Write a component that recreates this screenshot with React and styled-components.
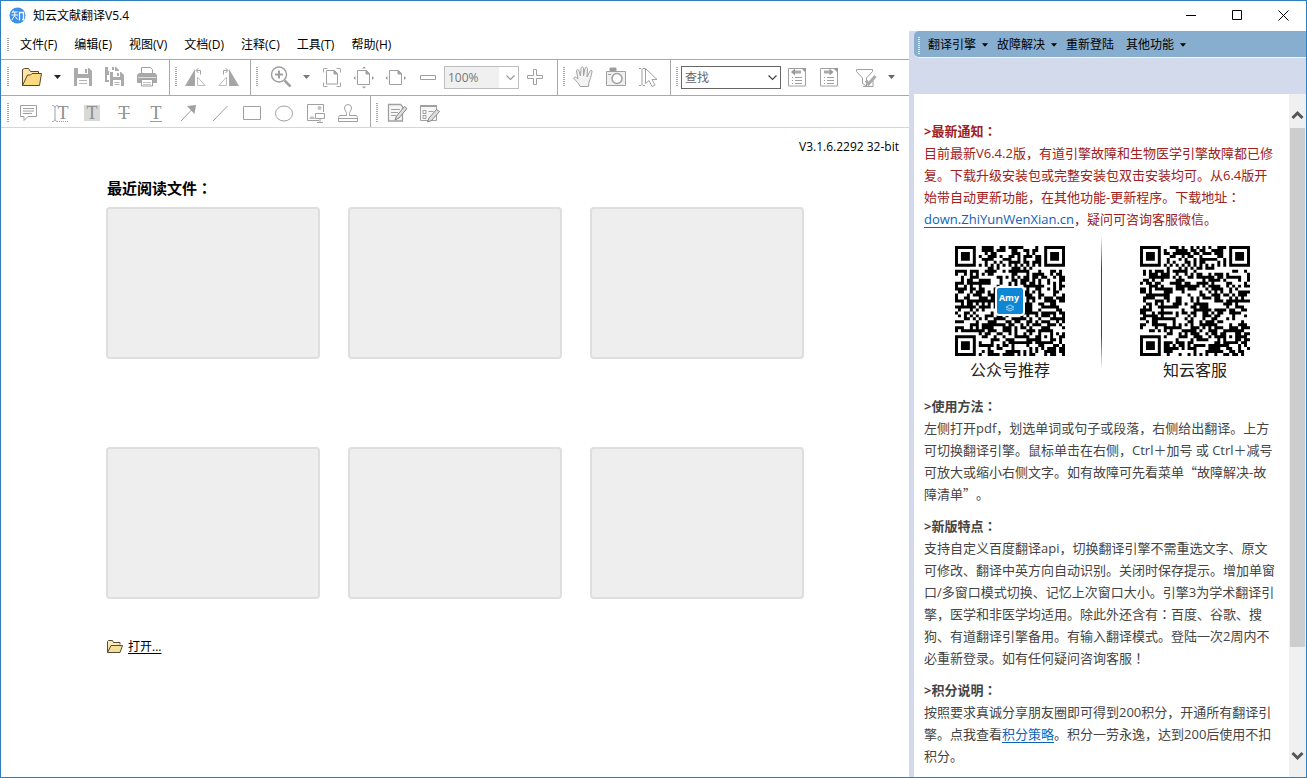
import React from 'react';
import styled, { createGlobalStyle } from 'styled-components';

const GlobalStyle = createGlobalStyle`
  * {
    box-sizing: border-box;
  }

  body {
    margin: 0;
    font-family: "Open Sans", "Noto Sans CJK SC", sans-serif;
    font-size: 12px;
    color: #000;
    text-spacing-trim: space-all;
  }

  button, select {
    font: inherit;
    color: inherit;
  }
`;

// Window frame
const Window = styled.div`
  display: flex;
  flex-direction: column;
  height: 100vh;
  background: #fff;
  border: 1px solid #2f7fbe;
  overflow: hidden;
`;

const TitleBar = styled.header`
  display: flex;
  align-items: center;
  flex: none;
  height: 30px;
  padding: 0 0 2px 8px;
`;

const Title = styled.h1`
  flex: 1;
  margin: 0 0 0 7px;
  font-size: 12px;
  font-weight: 400;
`;

const WindowButton = styled.button`
  display: flex;
  align-items: center;
  justify-content: center;
  width: 46px;
  height: 28px;
  padding: 0;
  border: 0;
  background: none;
`;

const Body = styled.div`
  display: flex;
  flex: 1;
  min-height: 0;
`;

const Reader = styled.main`
  display: flex;
  flex-direction: column;
  flex: 1;
  min-width: 0;
`;

// Menus
const MenuBar = styled.nav`
  display: flex;
  align-items: center;
  height: 28px;
  padding-left: 6px;
`;

const MenuItem = styled.button`
  padding: 0 9px 0 8px;
  border: 0;
  background: none;
  line-height: 20px;
  white-space: nowrap;
`;

const Grip = styled.span`
  flex: none;
  width: 2px;
  height: ${(p) => p.$height || 20}px;
  margin-right: ${(p) => p.$gap || 3}px;
  background: repeating-linear-gradient(${(p) => p.$color || '#a3a8b0'} 0 1px, transparent 1px 2px);
`;

// Toolbars
const ToolbarRow = styled.div`
  display: flex;
  height: 36px;
  border-top: 1px solid #a9a9a9;
`;

const AnnotationRow = styled.div`
  display: flex;
  height: 33px;
  border-top: 1px solid #a9a9a9;
  border-bottom: 1px solid #d4d6da;
`;

const ToolGroup = styled.div`
  display: flex;
  align-items: center;
  flex: none;
  padding: ${(p) => (p.$low ? '3px 6px 0' : '0 6px 1px')};
  padding-left: ${(p) => (p.$first ? 6 : 5)}px;
  border-right: ${(p) => (p.$open ? 0 : 1)}px solid #a9a9a9;
`;

const ToolButton = styled.button`
  display: flex;
  align-items: center;
  justify-content: center;
  flex: none;
  width: ${(p) => (p.$narrow ? 19 : 32)}px;
  height: 28px;
  margin-left: ${(p) => (p.$spaced ? 5 : 0)}px;
  padding: 0;
  border: 0;
  background: none;
`;

const Combo = styled.span`
  position: relative;
  flex: none;
  width: ${(p) => p.$width}px;
  height: 23px;

  svg {
    position: absolute;
    top: 8px;
    right: 4px;
    pointer-events: none;
  }
`;

const ComboSelect = styled.select`
  appearance: none;
  display: block;
  width: 100%;
  height: 100%;
  padding: 0 20px 0 3px;
  border: 1px solid ${(p) => (p.$muted ? '#bdbdbd' : '#666')};
  border-radius: 0;
  background: ${(p) => (p.$muted ? 'linear-gradient(to right, #f0f0f0 54px, #fff 54px)' : '#fff')};
  color: ${(p) => (p.$muted ? '#777' : '#666')};
  outline: 0;
`;

// Start page
const StartPage = styled.section`
  flex: 1;
  padding: 8px 10px 0 105px;
`;

const Version = styled.p`
  margin: 0;
  line-height: 22px;
  text-align: right;
`;

const RecentTitle = styled.h2`
  margin: 19px 0 8px 1px;
  font-size: 15px;
  font-weight: 700;
  line-height: 22px;
`;

const RecentGrid = styled.div`
  display: grid;
  grid-template-columns: repeat(3, 214px);
  gap: 88px 28px;
`;

const RecentCard = styled.div`
  height: 152px;
  background: #eee;
  border: 2px solid #dedede;
  border-radius: 4px;
`;

const OpenLink = styled.a`
  display: inline-flex;
  align-items: center;
  gap: 5px;
  margin: 38px 0 0 1px;
  line-height: 20px;
  color: #000;
  text-underline-offset: 2px;
`;

// Translation panel
const Panel = styled.aside`
  display: flex;
  flex-direction: column;
  flex: none;
  width: 397px;
  padding-left: 5px;
  background: #d3daec;
`;

const PanelMenu = styled.nav`
  display: flex;
  align-items: center;
  gap: 9px;
  flex: none;
  height: 27px;
  padding: 2px 0 0 4px;
  background: #87adcf;
  border-bottom: 1px solid #f2f5fa;
  border-radius: 5px 0 0 5px;
`;

const PanelMenuItem = styled.button`
  display: flex;
  align-items: center;
  gap: 6px;
  padding: 0 ${(p) => (p.$plain ? 3 : 0)}px 0 0;
  border: 0;
  background: none;
  line-height: 20px;
`;

const PanelBody = styled.div`
  display: flex;
  flex: 1;
  min-height: 0;
  margin-top: 36px;
  background: #fff;
`;

const Article = styled.div`
  flex: 1;
  padding: 26px 0 0 10px;
  overflow: hidden;
  font-size: 13px;
  line-height: 22px;
  color: #444;
  white-space: nowrap;
`;

const Note = styled.section`
  margin-bottom: 10px;
  color: ${(p) => (p.$alert ? '#a02020' : 'inherit')};

  h3 {
    margin: 0;
    font-size: 13px;
    font-weight: 700;
  }

  p {
    margin: 0;
  }

  a {
    color: #0f62b8;
    text-underline-offset: 3px;
  }
`;

const Quote = styled.span`
  font-family: "Noto Sans CJK SC", sans-serif;
`;

// Colons and exclamation marks sit in the middle of their cell
const Centered = styled.span.attrs({ lang: 'zh-TW' })`
  font-family: "Noto Sans CJK TC", sans-serif;
  line-height: 1;
`;

const CodeRow = styled.div`
  display: flex;
  gap: 36px;
  margin: -5px 0 14px;
  padding-left: 31px;
`;

const CodeFigure = styled.figure`
  display: flex;
  flex-direction: column;
  align-items: center;
  width: 110px;
  margin: 11px 0 0;

  figcaption {
    margin-top: 3px;
    font-size: 16px;
    color: #222;
  }
`;

const CodeDivider = styled.span`
  width: 1px;
  height: 134px;
  margin-right: 2px;
  background: linear-gradient(#fff, #444 25%, #444 75%, #fff);
`;

const ScrollBar = styled.div`
  display: flex;
  flex-direction: column;
  flex: none;
  width: 17px;
  background: #f0f0f0;
`;

const ScrollButton = styled.button`
  display: flex;
  justify-content: center;
  align-items: center;
  width: 17px;
  height: ${(p) => (p.$up ? 34 : 38)}px;
  padding: ${(p) => (p.$up ? '8px 0 0' : '0 0 4px')};
  border: 0;
  background: none;
`;

const ScrollTrack = styled.div`
  flex: 1;
  padding: 0 1px;
`;

const ScrollThumb = styled.div`
  height: 85%;
  background: #cdcdcd;
`;

// Icons
const Icon = ({ children, size = 24 }) => (
  <svg
    width={size}
    height={size}
    viewBox="0 0 24 24"
    fill="none"
    stroke="#a0a0a0"
    aria-hidden="true"
  >
    {children}
  </svg>
);

const Caret = ({ color = '#000', width = 7 }) => (
  <svg width={width} height="4" viewBox="0 0 7 4" aria-hidden="true">
    <path d="M0 0h7L3.500 4z" fill={color} />
  </svg>
);

const Chevron = ({ color }) => (
  <svg width="9" height="7" viewBox="0 0 9 7" fill="none" stroke={color} aria-hidden="true">
    <path d="M.5 1.500l4 4 4-4" strokeWidth="1.200" />
  </svg>
);

const ScrollArrow = ({ d }) => (
  <svg width="13" height="10" viewBox="0 0 13 10" fill="none" stroke="#555" strokeWidth="3" aria-hidden="true">
    <path d={d} />
  </svg>
);

const Logo = () => (
  <svg width="17" height="17" viewBox="0 0 17 17" fill="none" stroke="#fff" aria-hidden="true">
    <circle cx="8.500" cy="8.500" r="8" fill="#3b8fe8" stroke="none" />
    <path d="M4.500 3.500L3 6M4 5H8.500M2.500 8H9M5.800 5V8.500L2.800 13M6.300 9.500L8.500 12.500" />
    <path d="M10.500 13.500V5.500H14.500V12.500H13" strokeWidth="1.300" />
  </svg>
);

const icons = {
  open: (
    <>
      <path d="M2.500 20.500V4.500l2-1h4l2 3h8v3" fill="#fbe6a8" stroke="#5a4630" />
      <path d="M2.500 20.500l5-10.500 3 0 1.500-1.500H21.500L19.500 20.500z" fill="#fbd980" stroke="#5a4630" />
    </>
  ),
  save: (
    <>
      <path d="M3 3h15l3 3v15H3z" fill="#ababab" stroke="none" />
      <path d="M7 3h10v6H7zM6 13h12v8H6z" fill="#fff" stroke="none" />
      <path d="M14 4h2v4h-2z" fill="#ababab" stroke="none" />
      <path d="M8 15.500h8M8 18.500h8" stroke="#b5b5b5" />
    </>
  ),
  saveAll: (
    <>
      <path d="M2 2h11l3 3v12H2z" fill="#ababab" stroke="none" />
      <path d="M5 2h7v4H5zM4 10h3v5H4z" fill="#fff" stroke="none" />
      <path d="M9 2h2v3H9z" fill="#ababab" stroke="none" />
      <path d="M6.500 6.500H18l3.500 3.500V21.500H6.500z" fill="#ababab" stroke="#fff" />
      <path d="M10 7h7v5h-7zM10 15h8v6h-8z" fill="#fff" stroke="none" />
      <path d="M14 8h2v3h-2z" fill="#ababab" stroke="none" />
      <path d="M11.500 17.500h5M11.500 19.500h5" stroke="#b5b5b5" />
    </>
  ),
  print: (
    <>
      <path d="M6.500 9V2.500h9l2 2V9" fill="#fff" />
      <path d="M2 10l2-2h16l2 2v8H2z" fill="#a8a8a8" stroke="none" />
      <path d="M6.500 14.500h11v6.500h-11z" fill="#fff" />
      <path d="M3 12.500h18" stroke="#ddd" />
      <path d="M8 17.500h8M8 19.500h8" stroke="#c4c4c4" />
    </>
  ),
  rotateLeft: (
    <>
      <path d="M1 21H11V4z" fill="#a6a6a6" stroke="none" />
      <path d="M13.500 20.500H21L13.500 12z" stroke="#c0c0c0" />
      <path d="M12.500 5.500h4v4M14.500 3l-2.500 2.500 2.500 2.500" />
    </>
  ),
  rotateRight: (
    <>
      <path d="M23 21H13V4z" fill="#a6a6a6" stroke="none" />
      <path d="M10.500 20.500H3L10.500 12z" stroke="#c0c0c0" />
      <path d="M11.500 5.500h-4v4M9.500 3l2.500 2.500-2.500 2.500" />
    </>
  ),
  zoomIn: (
    <>
      <circle cx="10" cy="9.500" r="7.500" strokeWidth="1.500" />
      <path d="M10 5.500v8M6 9.500h8" strokeWidth="2" />
      <path d="M15.500 15.500l6 6" strokeWidth="2.500" />
    </>
  ),
  fitPage: (
    <>
      <path d="M3.500 7.500V3.500h4M16.500 3.500h4v4M20.500 17.500v4h-4M7.500 21.500h-4v-4" stroke="#aaa" />
      <path d="M6.500 5.500h8l3 3v10.500h-11z" />
      <path d="M14 5.500v3.500h3.500z" fill="#a0a0a0" />
    </>
  ),
  fitVisible: (
    <>
      <path d="M5.500 5.500h9l3 3v11h-12z" />
      <path d="M14 5.500v3.500h3.500z" fill="#a0a0a0" />
      <path d="M10 3.500l2-2 2 2zM10 21.500l2 2 2-2zM3.500 11l-2 2 2 2zM20 11l2 2-2 2z" fill="#999" stroke="none" />
    </>
  ),
  fitWidth: (
    <>
      <path d="M5.500 5.500h9l3 3v11h-12z" />
      <path d="M14 5.500v3.500h3.500z" fill="#a0a0a0" />
      <path d="M3.500 11l-2 2 2 2zM20 11l2 2-2 2z" fill="#999" stroke="none" />
    </>
  ),
  minus: <path d="M4.500 10.500h15v4h-15z" />,
  plus: <path d="M10.500 4.500h3v6h6v3h-6v6h-3v-6h-6v-3h6z" />,
  hand: (
    <path
      d="M8 21.500c-1-3-4-5.500-6.500-8.500 1-1.500 2.500-1 4.500 1L4.500 6c0-2 2-2 2.500 0l1.500 5L9 3.500c0-2 2.500-2 2.500 0V11l1.500-7.500c.5-2 2.500-1.500 2.500.5L15 12l3-6c1-1.500 2.500-.5 2 1-1 4-1.500 7-3 10l-.5 4.500z"
      fill="#f3f3f3"
    />
  ),
  camera: (
    <>
      <path d="M6 3h6v3H6z" fill="#999" />
      <path d="M2.500 6.500h19v14h-19z" fill="#f0f0f0" />
      <circle cx="13" cy="13.500" r="5" fill="#fff" strokeWidth="1.500" />
      <path d="M4 9.500h3" />
    </>
  ),
  selectText: (
    <>
      <path d="M3 3.500h2l1 1 1-1h2M6 4.500v15M3 20.500h2l1-1 1 1h2" />
      <path d="M9.500 3.500v15l3.500-3 3 6 3-1.500-3-5.500h5z" fill="#fff" />
    </>
  ),
  findPrev: (
    <>
      <path d="M3.500 3.500h14l3 3v14.500h-17z" fill="#fff" />
      <path d="M16 3h5v5z" fill="#999" stroke="none" />
      <path d="M10 7h6" strokeWidth="3" stroke="#aaa" />
      <path d="M6 7l4-3.500v7z" fill="#999" stroke="none" />
      <path d="M7 12.500h1M10 12.500h7M7 15.500h1M10 15.500h7M7 18.500h1M10 18.500h7" />
    </>
  ),
  findNext: (
    <>
      <path d="M3.500 3.500h14l3 3v14.500h-17z" fill="#fff" />
      <path d="M16 3h5v5z" fill="#999" stroke="none" />
      <path d="M7 7h6" strokeWidth="3" stroke="#aaa" />
      <path d="M16.500 7l-4-3.500v7z" fill="#999" stroke="none" />
      <path d="M7 12.500h1M10 12.500h7M7 15.500h1M10 15.500h7M7 18.500h1M10 18.500h7" />
    </>
  ),
  filter: (
    <>
      <path d="M2.500 4.500h16v2l-6 6.500v8l-4-2.500V13l-6-6.500z" />
      <path d="M9 21.500h10v-6" />
      <path d="M12 15.500l2.500 3.500 7-8" strokeWidth="3" stroke="#ababab" />
    </>
  ),
  comment: (
    <>
      <path d="M4.500 4.500h16v11h-8.500l-4 4v-4H4.500z" />
      <path d="M7 7.500h11M7 10h11M7 12.500h9" />
    </>
  ),
  textInsert: (
    <>
      <path d="M4 4.500c2 0 3 1 3 2v12c0 1-1 2-3 2M10 4.500c-2 0-3 1-3 2M10 20.500c-2 0-3-1-3-2" />
      <Letter x="15" />
      <path d="M11 20.500h9" strokeDasharray="1 1" />
    </>
  ),
  highlight: (
    <>
      <path d="M4 4h16v16H4z" fill="#d8d8d8" stroke="none" />
      <Letter x="12" />
    </>
  ),
  strike: (
    <>
      <Letter x="12" />
      <path d="M6 12.500h12" />
    </>
  ),
  underline: (
    <>
      <Letter x="12" />
      <path d="M6 20.500h12" />
    </>
  ),
  arrow: (
    <>
      <path d="M5 20L16 8.500" />
      <path d="M11 5L20 4l-1.500 9z" fill="#a0a0a0" stroke="none" />
    </>
  ),
  line: <path d="M5 20L19.500 5" />,
  rect: <path d="M3.500 5.500h17v13h-17z" />,
  ellipse: <ellipse cx="12" cy="12.500" rx="8.500" ry="7.500" />,
  imageNote: (
    <>
      <path d="M15 19.500H3.500v-16h16V11" />
      <circle cx="15.500" cy="7" r="2" fill="#c0c0c0" stroke="none" />
      <path d="M5 18c2-4 5-3 6 0z" fill="#c0c0c0" stroke="none" />
      <path d="M11.500 12.500h9v5h-9zM13 21.500h6M16 17.500v4" />
    </>
  ),
  stamp: (
    <path
      d="M10.500 12.500c0-2-2-3-2-5.500a3.500 3.500 0 0 1 7 0c0 2.500-2 3.500-2 5.500v2h7l1 2v4H2.500v-4l1-2h7zM2.500 17.500h19"
    />
  ),
  editPage: (
    <>
      <path d="M3.500 3.500h12l2 2v14.500h-14z" fill="#f7f7f7" strokeWidth="1.300" />
      <path d="M6 8.500h9M6 11.500h7M6 14.500h5" />
      <path d="M10 19l1.500-4 8-9.500 2.500 2-8 9.500z" fill="#ddd" stroke="#888" />
    </>
  ),
  editForm: (
    <>
      <path d="M3.500 4.500h16v15h-16z" fill="#f7f7f7" />
      <path d="M3.500 5h16" strokeWidth="2" />
      <path d="M6 9.500h3v3H6zM6 14.500h3v3H6zM11.500 10.500h5" />
      <path d="M10.500 21l1.500-4 7.500-8.500 3 2-8 9z" fill="#ddd" stroke="#888" />
    </>
  ),
};

function Letter({ x }) {
  return (
    <text
      x={x}
      y="18"
      textAnchor="middle"
      fontFamily="Liberation Serif, serif"
      fontSize="18"
      fill="#8c8c8c"
      stroke="none"
    >
      T
    </text>
  );
}

// Version 5 code: 37 modules a side, with three finders and one alignment mark
const SIZE = 37;

const ring = (x, y, r) => Math.max(Math.abs(x), Math.abs(y)) <= r && Math.max(Math.abs(x), Math.abs(y)) !== r - 1;

function codePath(seed) {
  let state = seed;
  let d = '';
  const finders = [[3, 3], [SIZE - 4, 3], [3, SIZE - 4]];
  for (let y = 0; y < SIZE; y += 1) {
    for (let x = 0; x < SIZE; x += 1) {
      state = (state * 1103515245 + 12345) % 2147483648;
      let dark = state / 2147483648 > 0.48;
      if (x === 6 || y === 6) dark = (x + y) % 2 === 0;
      if (Math.abs(x - 30) < 3 && Math.abs(y - 30) < 3) dark = ring(x - 30, y - 30, 2);
      finders.forEach(([fx, fy]) => {
        if (Math.abs(x - fx) < 5 && Math.abs(y - fy) < 5) {
          const far = Math.max(Math.abs(x - fx), Math.abs(y - fy));
          dark = far !== 4 && ring(x - fx, y - fy, 3);
        }
      });
      if (dark) d += `M${x} ${y}h1v1h-1z`;
    }
  }
  return d;
}

const Code = ({ seed, label, badge }) => (
  <svg width="110" height="110" viewBox="0 0 110 110" role="img" aria-label={label}>
    <path d={codePath(seed)} fill="#000" transform={`scale(${110 / SIZE})`} />
    {badge && (
      <>
        <rect x="40" y="40" width="30" height="30" rx="4" fill="#fff" />
        <rect x="42" y="42" width="26" height="26" rx="2" fill="#0f86d3" />
        <text x="54" y="55" textAnchor="middle" fontFamily="Open Sans, sans-serif" fontWeight="700" fontSize="9" fill="#fff">
          Amy
        </text>
        <path d="M51 61l4-2 4 2-4 2zM51 63l4 2 4-2" fill="none" stroke="#9fd4f5" />
      </>
    )}
  </svg>
);

const menus = ['文件(F)', '编辑(E)', '视图(V)', '文档(D)', '注释(C)', '工具(T)', '帮助(H)'];

const panelMenus = [
  { label: '翻译引擎', drop: true },
  { label: '故障解决', drop: true },
  { label: '重新登陆', drop: false },
  { label: '其他功能', drop: true },
];

const annotationTools = [
  ['comment', '附注'],
  ['textInsert', '插入文本'],
  ['highlight', '高亮'],
  ['strike', '删除线'],
  ['underline', '下划线'],
  ['arrow', '箭头'],
  ['line', '直线'],
  ['rect', '矩形'],
  ['ellipse', '椭圆'],
  ['imageNote', '图像'],
  ['stamp', '图章'],
];

const Tool = ({ name, label, spaced }) => (
  <ToolButton aria-label={label} $spaced={spaced}>
    <Icon>{icons[name]}</Icon>
  </ToolButton>
);

const DropTool = ({ label, color }) => (
  <ToolButton aria-label={label} $narrow>
    <Caret color={color} />
  </ToolButton>
);

const MainToolbar = () => (
  <ToolbarRow>
    <ToolGroup $first>
      <Grip $gap={7} />
      <Tool name="open" label="打开" />
      <DropTool label="打开选项" color="#222" />
      <Tool name="save" label="保存" />
      <Tool name="saveAll" label="全部保存" />
      <Tool name="print" label="打印" />
    </ToolGroup>
    <ToolGroup>
      <Grip />
      <Tool name="rotateLeft" label="向左旋转" />
      <Tool name="rotateRight" label="向右旋转" />
    </ToolGroup>
    <ToolGroup>
      <Grip $gap={7} />
      <Tool name="zoomIn" label="放大工具" />
      <DropTool label="放大选项" color="#777" />
      <Tool name="fitPage" label="适合页面" />
      <Tool name="fitVisible" label="适合可见" />
      <Tool name="fitWidth" label="适合宽度" />
      <Tool name="minus" label="缩小" />
      <Combo $width={75}>
        <ComboSelect $muted aria-label="缩放" defaultValue="100%">
          <option>100%</option>
        </ComboSelect>
        <Chevron color="#999" />
      </Combo>
      <Tool name="plus" label="放大" />
    </ToolGroup>
    <ToolGroup>
      <Grip />
      <Tool name="hand" label="手形工具" />
      <Tool name="camera" label="快照" />
      <Tool name="selectText" label="选择文本" />
    </ToolGroup>
    <ToolGroup $open>
      <Grip />
      <Combo $width={100}>
        <ComboSelect aria-label="查找" defaultValue="查找">
          <option>查找</option>
        </ComboSelect>
        <Chevron color="#444" />
      </Combo>
      <Tool name="findPrev" label="上一个" />
      <Tool name="findNext" label="下一个" />
      <Tool name="filter" label="筛选" spaced />
      <DropTool label="筛选选项" color="#666" />
    </ToolGroup>
  </ToolbarRow>
);

const AnnotationToolbar = () => (
  <AnnotationRow>
    <ToolGroup $first $low>
      <Grip />
      {annotationTools.map(([name, label]) => (
        <Tool key={name} name={name} label={label} />
      ))}
    </ToolGroup>
    <ToolGroup $open $low>
      <Grip />
      <Tool name="editPage" label="编辑页面" />
      <Tool name="editForm" label="编辑表单" />
    </ToolGroup>
  </AnnotationRow>
);

const TranslationPanel = () => (
  <Panel>
    <PanelMenu>
      <Grip $color="#e6eef7" $height={17} $gap={-1} />
      {panelMenus.map(({ label, drop }) => (
        <PanelMenuItem key={label} $plain={!drop}>
          {label}
          {drop && <Caret width={6} />}
        </PanelMenuItem>
      ))}
    </PanelMenu>
    <PanelBody>
      <Article>
        <Note $alert>
          <h3>&gt;最新通知<Centered>：</Centered></h3>
          <p>
            目前最新V6.4.2版，有道引擎故障和生物医学引擎故障都已修<br />
            复。下载升级安装包或完整安装包双击安装均可。从6.4版开<br />
            始带自动更新功能，在其他功能-更新程序。下载地址<Centered>：</Centered><br />
            <a href="#download">down.ZhiYunWenXian.cn</a>，疑问可咨询客服微信。
          </p>
        </Note>
        <CodeRow>
          <CodeFigure>
            <Code seed={5417} label="公众号推荐" badge />
            <figcaption>公众号推荐</figcaption>
          </CodeFigure>
          <CodeDivider />
          <CodeFigure>
            <Code seed={90211} label="知云客服" />
            <figcaption>知云客服</figcaption>
          </CodeFigure>
        </CodeRow>
        <Note>
          <h3>&gt;使用方法<Centered>：</Centered></h3>
          <p>
            左侧打开pdf，划选单词或句子或段落，右侧给出翻译。上方<br />
            可切换翻译引擎。鼠标单击在右侧，Ctrl＋加号 或 Ctrl＋减号<br />
            可放大或缩小右侧文字。如有故障可先看菜单<Quote>“</Quote>故障解决-故<br />
            障清单<Quote>”</Quote>。
          </p>
        </Note>
        <Note>
          <h3>&gt;新版特点<Centered>：</Centered></h3>
          <p>
            支持自定义百度翻译api，切换翻译引擎不需重选文字、原文<br />
            可修改、翻译中英方向自动识别。关闭时保存提示。增加单窗<br />
            口/多窗口模式切换、记忆上次窗口大小。引擎3为学术翻译引<br />
            擎，医学和非医学均适用。除此外还含有<Centered>：</Centered>百度、谷歌、搜<br />
            狗、有道翻译引擎备用。有输入翻译模式。登陆一次2周内不<br />
            必重新登录。如有任何疑问咨询客服<Centered>！</Centered>
          </p>
        </Note>
        <Note>
          <h3>&gt;积分说明<Centered>：</Centered></h3>
          <p>
            按照要求真诚分享朋友圈即可得到200积分，开通所有翻译引<br />
            擎。点我查看<a href="#points">积分策略</a>。积分一劳永逸，达到200后使用不扣<br />
            积分。
          </p>
        </Note>
      </Article>
      <ScrollBar>
        <ScrollButton $up aria-label="向上滚动">
          <ScrollArrow d="M1.500 8l5-5 5 5" />
        </ScrollButton>
        <ScrollTrack>
          <ScrollThumb />
        </ScrollTrack>
        <ScrollButton aria-label="向下滚动">
          <ScrollArrow d="M1.500 2l5 5 5-5" />
        </ScrollButton>
      </ScrollBar>
    </PanelBody>
  </Panel>
);

const App = () => {
  return (
    <>
      <GlobalStyle />
      <Window lang="zh-CN">
        <TitleBar>
          <Logo />
          <Title>知云文献翻译V5.4</Title>
          <WindowButton aria-label="最小化">
            <svg width="11" height="11" stroke="#000"><path d="M0 5.500h10" /></svg>
          </WindowButton>
          <WindowButton aria-label="最大化">
            <svg width="11" height="11" stroke="#000" fill="none"><path d="M.5 .5h9v9h-9z" /></svg>
          </WindowButton>
          <WindowButton aria-label="关闭">
            <svg width="11" height="11" stroke="#000"><path d="M.5 .5l10 10M10.500 .5l-10 10" /></svg>
          </WindowButton>
        </TitleBar>
        <Body>
          <Reader>
            <MenuBar>
              <Grip $height={14} />
              {menus.map((label) => (
                <MenuItem key={label}>{label}</MenuItem>
              ))}
            </MenuBar>
            <MainToolbar />
            <AnnotationToolbar />
            <StartPage>
              <Version>V3.1.6.2292 32-bit</Version>
              <RecentTitle>最近阅读文件<Centered>：</Centered></RecentTitle>
              <RecentGrid>
                {[1, 2, 3, 4, 5, 6].map((slot) => (
                  <RecentCard key={slot} />
                ))}
              </RecentGrid>
              <OpenLink href="#open">
                <svg width="16" height="14" viewBox="0 0 16 14" stroke="#5a4a30" aria-hidden="true">
                  <path d="M.5 12.500V1.500l1-1h4l1 2h6.500v2" fill="#f6eab8" />
                  <path d="M.5 12.500l3.500-7h11.500l-2.500 7z" fill="#f1df9a" />
                </svg>
                打开...
              </OpenLink>
            </StartPage>
          </Reader>
          <TranslationPanel />
        </Body>
      </Window>
    </>
  );
};

export default App;
